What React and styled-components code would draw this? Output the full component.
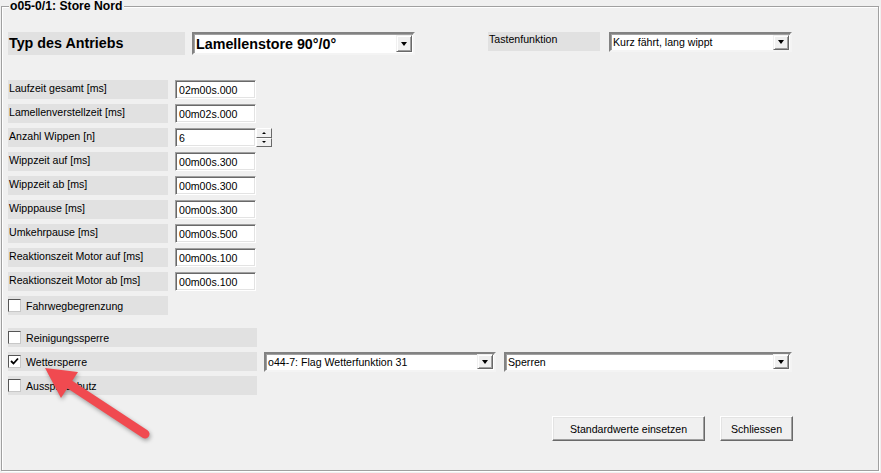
import styled, { createGlobalStyle } from "styled-components";

const GlobalStyle = createGlobalStyle`
  html, body {
    margin: 0;
    padding: 0;
    background: #f0f0f0;
  }
  body {
    font-family: "Liberation Sans", Arial, sans-serif;
    font-size: 10.6px;
    color: #000;
  }
  * {
    box-sizing: border-box;
  }
`;

const Page = styled.div`
  position: relative;
  width: 881px;
  height: 473px;
  overflow: hidden;
`;

const Group = styled.fieldset`
  margin: 0 0 0 1px;
  width: 878px;
  height: 471px;
  padding: 20px 85px 0 6px;
  border: 1px solid #a0a0a0;
  box-shadow: inset 1px 1px 0 #fff, 1px 1px 0 #fff;
  display: flex;
  flex-direction: column;
`;

const Legend = styled.legend`
  margin-left: 1px;
  padding: 0 2px 0 1px;
  font-weight: bold;
  font-size: 12.2px;
  line-height: 12px;
  background: #f0f0f0;
`;

const HeaderRow = styled.div`
  display: flex;
  align-items: flex-start;
  height: 23px;
`;

const LabelBox = styled.div`
  width: ${({ $w }) => $w}px;
  height: ${({ $h }) => $h || 19}px;
  margin-left: ${({ $ml }) => $ml || 0}px;
  background: #e1e1e1;
  display: flex;
  align-items: ${({ $center }) => ($center ? "center" : "flex-start")};
  padding: ${({ $pt }) => ($pt ?? 2)}px 0 0 ${({ $pl }) => ($pl ?? 1)}px;
  font-size: ${({ $big }) => ($big ? "14.3px" : "inherit")};
  font-weight: ${({ $big }) => ($big ? "bold" : "normal")};
  white-space: nowrap;
  flex-shrink: 0;
`;

const Combo = styled.div`
  width: ${({ $w }) => $w}px;
  height: ${({ $h }) => $h || 20}px;
  margin-left: ${({ $ml }) => $ml || 0}px;
  background: #fff;
  border: 2px solid;
  border-color: #828282 #f4f4f4 #f4f4f4 #828282;
  box-shadow: inset 1px 1px 0 #a0a0a0;
  display: flex;
  align-items: center;
  justify-content: space-between;
  padding: 0 1px 0 2px;
  font-size: ${({ $bold }) => ($bold ? "14.3px" : "inherit")};
  font-weight: ${({ $bold }) => ($bold ? "bold" : "normal")};
  white-space: nowrap;
  flex-shrink: 0;
`;

const DropButton = styled.div`
  width: 16px;
  height: ${({ $h }) => $h || 15}px;
  background: #f0f0f0;
  border: 1px solid;
  border-color: #f0f0f0 #696969 #696969 #f0f0f0;
  box-shadow: inset 1px 1px 0 #fff, inset -1px -1px 0 #a0a0a0;
  display: flex;
  align-items: center;
  justify-content: center;
  flex-shrink: 0;

  &::after {
    content: "";
    border-left: 3.5px solid transparent;
    border-right: 3.5px solid transparent;
    border-top: 4px solid #000;
  }
`;

const ParamList = styled.div`
  margin-top: 25px;
  display: flex;
  flex-direction: column;
  gap: 5px;
`;

const Row = styled.div`
  display: flex;
  align-items: center;
  height: 19px;
`;

const Field = styled.div`
  width: 81px;
  height: 19px;
  margin-left: 7px;
  background: #fff;
  border: 1px solid;
  border-color: #a0a0a0 #fff #fff #a0a0a0;
  box-shadow: inset 1px 1px 0 #696969, inset -1px -1px 0 #e3e3e3;
  padding: 2px 0 0 3px;
  line-height: 14px;
`;

const Spinner = styled.div`
  width: 16px;
  height: 19px;
  display: flex;
  flex-direction: column;
`;

const SpinButton = styled.div`
  flex: 1;
  background: #f0f0f0;
  border: 1px solid;
  border-color: #fff #696969 #696969 #fff;
  display: flex;
  align-items: center;
  justify-content: center;

  &::after {
    content: "";
    border-left: 2px solid transparent;
    border-right: 2px solid transparent;
    ${({ $up }) =>
      $up ? "border-bottom: 2px solid #000;" : "border-top: 2px solid #000;"}
  }
`;

const CheckBox = styled.span`
  width: 13px;
  height: 13px;
  background: #fff;
  border: 1px solid;
  border-color: #555 #c8c8c8 #c8c8c8 #555;
  display: inline-flex;
  align-items: center;
  justify-content: center;
  margin-right: 5px;
  flex-shrink: 0;
`;

const CheckList = styled.div`
  margin-top: 13px;
  display: flex;
  flex-direction: column;
  gap: 5px;
`;

const ButtonRow = styled.div`
  margin-top: 21px;
  display: flex;
  justify-content: flex-end;
  gap: 15px;
`;

const Button = styled.button`
  width: ${({ $w }) => $w}px;
  height: 25px;
  font-family: inherit;
  font-size: inherit;
  color: #000;
  background: #f0f0f0;
  border: 1px solid;
  border-color: #fff #696969 #696969 #fff;
  box-shadow: inset -1px -1px 0 #a0a0a0, inset 1px 1px 0 #e3e3e3;
  padding: 0;
`;

const ArrowLayer = styled.svg`
  position: absolute;
  left: 0;
  top: 0;
  width: 881px;
  height: 473px;
  pointer-events: none;
  filter: drop-shadow(1px 2px 2px rgba(0, 0, 0, 0.35));
`;

const params = [
  ["Laufzeit gesamt [ms]", "02m00s.000"],
  ["Lamellenverstellzeit [ms]", "00m02s.000"],
  ["Anzahl Wippen [n]", "6", true],
  ["Wippzeit auf [ms]", "00m00s.300"],
  ["Wippzeit ab [ms]", "00m00s.300"],
  ["Wipppause [ms]", "00m00s.300"],
  ["Umkehrpause [ms]", "00m00s.500"],
  ["Reaktionszeit Motor auf [ms]", "00m00s.100"],
  ["Reaktionszeit Motor ab [ms]", "00m00s.100"],
];

function Check({ checked }) {
  return (
    <CheckBox>
      {checked && (
        <svg width="9" height="9" viewBox="0 0 9 9">
          <path d="M1 4 L3.5 6.5 L8 1.5" stroke="#000" strokeWidth="1.8" fill="none" />
        </svg>
      )}
    </CheckBox>
  );
}

export default function App() {
  return (
    <Page>
      <GlobalStyle />
      <Group>
        <Legend>o05-0/1: Store Nord</Legend>
        <HeaderRow>
          <LabelBox $w={177} $h={23} $big $pt={3}>
            Typ des Antriebs
          </LabelBox>
          <Combo $w={223} $h={23} $ml={7} $bold>
            <span>Lamellenstore 90°/0°</span>
            <DropButton $h={17} />
          </Combo>
          <LabelBox $w={112} $h={19} $pt={1} $ml={73}>
            Tastenfunktion
          </LabelBox>
          <Combo $w={183} $ml={9}>
            <span>Kurz fährt, lang wippt</span>
            <DropButton />
          </Combo>
        </HeaderRow>

        <ParamList>
          {params.map(([label, value, spin]) => (
            <Row key={label}>
              <LabelBox $w={160}>{label}</LabelBox>
              <Field>{value}</Field>
              {spin && (
                <Spinner>
                  <SpinButton $up />
                  <SpinButton />
                </Spinner>
              )}
            </Row>
          ))}
          <Row>
            <LabelBox $w={160} $center $pt={0} $pl={0}>
              <Check />
              Fahrwegbegrenzung
            </LabelBox>
          </Row>
        </ParamList>

        <CheckList>
          <Row>
            <LabelBox $w={249} $center $pt={0} $pl={0}>
              <Check />
              Reinigungssperre
            </LabelBox>
          </Row>
          <Row>
            <LabelBox $w={249} $center $pt={0} $pl={0}>
              <Check checked />
              Wettersperre
            </LabelBox>
            <Combo $w={232} $ml={7}>
              <span>o44-7: Flag Wetterfunktion 31</span>
              <DropButton />
            </Combo>
            <Combo $w={288} $ml={8}>
              <span>Sperren</span>
              <DropButton />
            </Combo>
          </Row>
          <Row>
            <LabelBox $w={249} $center $pt={0} $pl={0}>
              <Check />
              Ausspielschutz
            </LabelBox>
          </Row>
        </CheckList>

        <ButtonRow>
          <Button $w={153}>Standardwerte einsetzen</Button>
          <Button $w={73}>Schliessen</Button>
        </ButtonRow>
      </Group>

      <ArrowLayer viewBox="0 0 881 473">
        <line
          x1="66"
          y1="382"
          x2="145"
          y2="434"
          stroke="#f04a50"
          strokeWidth="9"
          strokeLinecap="round"
        />
        <polygon points="45,368 78,372 61,398" fill="#f04a50" />
      </ArrowLayer>
    </Page>
  );
}
